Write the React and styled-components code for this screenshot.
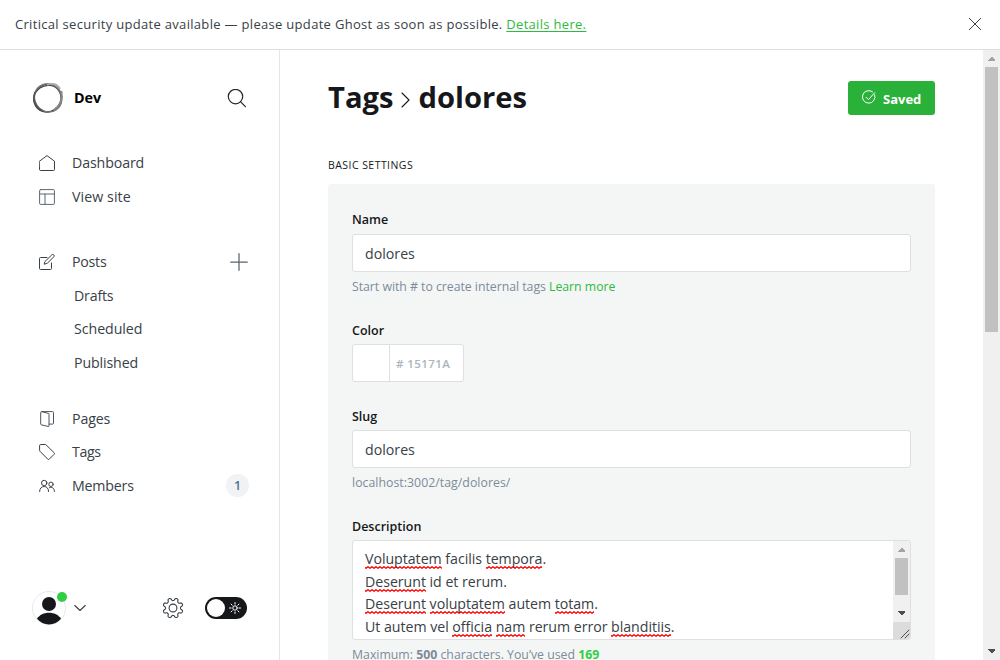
import React from "react";
import styled, { createGlobalStyle, css } from "styled-components";

const GlobalStyle = createGlobalStyle`
  * { box-sizing: border-box; }
  html, body, #root { height: 100%; }
  body {
    margin: 0;
    overflow: hidden;
    background: #fff;
    color: #394047;
    font-family: "Open Sans", "Noto Sans", sans-serif;
    font-size: 14.2px;
  }
  h1, h2, p { margin: 0; font: inherit; }
  button { margin: 0; padding: 0; border: 0; background: none; font: inherit; color: inherit; }
  a { color: #30b940; text-decoration: none; }
  svg { display: block; flex: none; }
`;

const Page = styled.div`
  display: flex;
  flex-direction: column;
  width: 1000px;
  height: 660px;
  overflow: hidden;
`;

const Banner = styled.header`
  display: flex;
  flex: none;
  align-items: center;
  justify-content: space-between;
  height: 50px;
  padding: 0 18px 2px 15px;
  border-bottom: 1px solid #dddddd;
  font-size: 13px;
  letter-spacing: 0.31px;
  white-space: nowrap;

  a { text-decoration: underline; text-underline-offset: 2px; }
`;

const Body = styled.div`
  display: flex;
  flex: 1;
  min-height: 0;
`;

const Sidebar = styled.nav`
  display: flex;
  flex: none;
  flex-direction: column;
  width: 280px;
  border-right: 1px solid #e3e5e6;
`;

const SiteHeader = styled.div`
  display: flex;
  align-items: center;
  height: 32px;
  margin: 32px 33px 32.25px 32px;
`;

const SiteName = styled.div`
  flex: 1;
  margin-left: 10px;
  padding-bottom: 2px;
  color: #000;
  font-size: 14.3px;
  font-weight: 700;
`;

const NavGroup = styled.div`
  margin-bottom: ${(p) => p.$gap || 0}px;
  padding: 0 31px 0 39px;
`;

const NavItem = styled.div`
  display: flex;
  align-items: center;
  height: 33.5px;
  padding-left: ${(p) => (p.$sub ? 35 : 0)}px;
`;

const NavLabel = styled.span`
  flex: 1;
  margin-left: ${(p) => (p.$sub ? 0 : 17)}px;
  padding-bottom: 0.5px;
  letter-spacing: ${(p) => p.$ls ?? -0.12}px;
`;

const Badge = styled.span`
  width: 23px;
  height: 23px;
  margin-right: -1px;
  border-radius: 50%;
  background: #f0f2f4;
  color: #54709a;
  font-size: 12.5px;
  font-weight: 600;
  line-height: 24px;
  text-align: center;
`;

const SidebarFooter = styled.div`
  display: flex;
  align-items: center;
  height: 34px;
  margin: auto 32px 35px 32px;
`;

const Avatar = styled.div`
  position: relative;
  width: 34px;
  height: 34px;
  margin-right: 8px;
`;

const Dot = styled.span`
  position: absolute;
  top: 1px;
  right: -1px;
  width: 10px;
  height: 10px;
  border-radius: 50%;
  background: #30cf43;
`;

const FooterTools = styled.div`
  display: flex;
  align-items: center;
  gap: 21px;
  margin-left: auto;
`;

const Toggle = styled.button`
  display: flex;
  align-items: center;
  justify-content: space-between;
  width: 42px;
  height: 22px;
  padding: 0 6px 0 2px;
  border-radius: 11px;
  background: #15171a;
`;

const Knob = styled.span`
  width: 18px;
  height: 18px;
  border-radius: 50%;
  background: #fff;
`;

const Main = styled.main`
  flex: 1;
  min-width: 0;
  padding: 0 48px;
  overflow: hidden;
`;

const TitleBar = styled.div`
  display: flex;
  align-items: center;
  justify-content: space-between;
  height: 34px;
  margin-top: 31px;
`;

const Title = styled.h1`
  display: flex;
  align-items: center;
  padding-bottom: 2px;
  color: #15171a;
  font-size: 29.2px;
  font-weight: 700;
  line-height: 34px;

  svg { margin: 6px 9px 0 7px; }
`;

const SaveButton = styled.button`
  display: flex;
  align-items: center;
  width: 87px;
  height: 34px;
  padding-left: 14px;
  border-radius: 3px;
  background: #2ab139;
  color: #fff;
  font-size: 13px;
  font-weight: 700;
  line-height: 34px;

  svg { margin: -2px 7px 0 0; }
`;

const SaveLabel = styled.span`
  padding-top: 2px;
`;

const SectionTitle = styled.h2`
  height: 19px;
  margin: 41px 0 9px;
  color: #15171a;
  font-size: 10.5px;
  line-height: 19px;
  letter-spacing: 0.45px;
`;

const Panel = styled.section`
  display: flex;
  flex-direction: column;
  width: 607px;
  height: 600px;
  padding: 24px;
  border-radius: 3px;
  background: #f4f6f6;
`;

const Label = styled.label`
  height: 22px;
  margin: ${(p) => p.$top || 1}px 0 ${(p) => (p.$top ? 2 : 3)}px;
  color: #15171a;
  font-size: 12.5px;
  font-weight: 600;
  line-height: 22px;
`;

const boxed = css`
  border: 1px solid #dddfe0;
  border-radius: 3px;
  background: #fff;
`;

const Input = styled.div`
  ${boxed}
  height: 38px;
  padding: 0 12px;
  line-height: 38px;
`;

const ColorInput = styled.div`
  ${boxed}
  display: flex;
  width: 112px;
  height: 38px;
  color: #abb4be;
  font-size: 11.5px;
  font-weight: 600;
  line-height: 38px;
  letter-spacing: 0.42px;
`;

const Swatch = styled.span`
  width: 37px;
  margin-right: 6px;
  border-right: 1px solid #dddfe0;
`;

const Hint = styled.p`
  height: 20px;
  margin-top: 5px;
  margin-bottom: -1px;
  color: #7c8b9a;
  font-size: 12.3px;
  line-height: 20px;
  letter-spacing: ${(p) => p.$ls || 0}px;
  white-space: nowrap;

  b { font-weight: 700; }
`;

const Used = styled.b`
  color: #30cf43;
`;

const TextArea = styled.div`
  ${boxed}
  display: flex;
  flex: none;
  height: 100px;
  overflow: hidden;
`;

const TextLines = styled.div`
  flex: 1;
  padding: 7px 0 0 12px;
`;

const TextLine = styled.div`
  height: 22.5px;
  line-height: 22.5px;
  white-space: nowrap;
  letter-spacing: -0.04px;
`;

const Misspelled = styled.span`
  padding-bottom: 1px;
  background: url("data:image/svg+xml,%3Csvg xmlns='http://www.w3.org/2000/svg' width='4' height='3'%3E%3Cpath d='M-1 .7L1 2.3L3 .7L5 2.3' fill='none' stroke='%23ff0000' stroke-width='1.3'/%3E%3C/svg%3E") left bottom / 4px 3px repeat-x;
`;

const ScrollColumn = styled.div`
  display: flex;
  flex-direction: column;
  width: 17px;
`;

const ScrollTrack = styled.div`
  display: flex;
  flex: ${(p) => (p.$fill ? 1 : "none")};
  flex-direction: column;
  align-items: center;
  width: 17px;
  background: #f0f0f0;
`;

const ScrollThumb = styled.div`
  flex: none;
  width: 13px;
  height: ${(p) => p.$h}px;
  margin-bottom: auto;
  background: #c1c1c1;
`;

const ResizeCorner = styled.div`
  width: 17px;
  height: 17px;
  background: #dcdcdc;
`;

function Icon({ w = 16, h = w, sw = 1, color = "#394047", children }) {
  return (
    <svg width={w} height={h} viewBox={`0 0 ${w} ${h}`} fill="none" stroke={color} strokeWidth={sw} strokeLinecap="round" strokeLinejoin="round">
      {children}
    </svg>
  );
}

const HomeIcon = () => (
  <Icon><path d="M.5 6.2 8 .6l7.500 5.600v8.300a1 1 0 0 1-1 1h-13a1 1 0 0 1-1-1z" /></Icon>
);
const LayoutIcon = () => (
  <Icon color="#5d6670"><rect x=".6" y=".6" width="14.800" height="14.800" rx="1" /><path d="M.6 5h14.800M6 5v10.400" /></Icon>
);
const PostsIcon = () => (
  <Icon>
    <path d="M8 3.500H1.500a1 1 0 0 0-1 1v10a1 1 0 0 0 1 1h10a1 1 0 0 0 1-1V9" />
    <path d="M6.200 7.300 12.800.9a1.300 1.300 0 0 1 2 0 1.300 1.300 0 0 1 0 1.900L8.300 9.300l-2.800.8z" />
  </Icon>
);
const PagesIcon = () => (
  <Icon color="#4c545d">
    <path d="M2.500.6 9 2.300a1 1 0 0 1 1 1V14.800a.7.700 0 0 1-1 .6l-6.300-1.500a1 1 0 0 1-1-1V1.600a1 1 0 0 1 1-1h10.800a1 1 0 0 1 1 1v10.500a1 1 0 0 1-1 1H10.200" />
  </Icon>
);
const TagIcon = () => (
  <Icon><path d="M.6 1.500a1 1 0 0 1 1-1H6.300a1 1 0 0 1 .7.300l8.200 8a1 1 0 0 1 0 1.400l-5 5a1 1 0 0 1-1.400 0L.9 7.200a1 1 0 0 1-.3-.7z" /></Icon>
);
const MembersIcon = () => (
  <Icon>
    <circle cx="5.200" cy="5" r="2.700" />
    <path d="M.6 13.500c0-3 1.800-5 4.600-5 2.700 0 4.400 2 4.400 5" />
    <circle cx="12" cy="6.300" r="2.200" />
    <path d="M10.500 9.600c3-1 4.900.7 4.900 3.900" />
  </Icon>
);
const SearchIcon = () => (
  <Icon w={19} sw={1.2} color="#24282c"><circle cx="8.500" cy="7.600" r="7.200" /><path d="m13.700 12.800 4.700 4.900" /></Icon>
);
const PlusIcon = () => (
  <Icon w={18} sw={1.25} color="#5a636c"><path d="M9 .7v16.600M.7 9h16.600" /></Icon>
);
const CloseIcon = () => (
  <Icon w={14}><path d="m1.300 1.300 11.400 11.400M12.700 1.300 1.300 12.700" /></Icon>
);
const ChevronRight = () => (
  <Icon w={9} h={16} sw={1.1} color="#15171a"><path d="m1 1 7 7-7 7" /></Icon>
);
const ChevronDown = () => (
  <Icon w={12} h={8} sw={1.1}><path d="m.8 1.500 5.200 5L11.200 1.500" /></Icon>
);
const CheckIcon = () => (
  <Icon w={14} color="#fff">
    <path d="M12.700 4.800A6.300 6.300 0 1 1 10.500 1.800" />
    <path d="M4 7.200 6.400 9.600 12.700 2.700" />
  </Icon>
);

/* Closed outline with eight rounded teeth. */
function gearOutline(center, radius, depth) {
  const points = [];
  for (let i = 0; i < 128; i += 1) {
    const a = (i / 128) * Math.PI * 2;
    const wave = Math.tanh(-1.8 * Math.cos(8 * a));
    const r = radius + wave * depth;
    points.push(`${(center + r * Math.cos(a)).toFixed(2)} ${(center + r * Math.sin(a)).toFixed(2)}`);
  }
  return `M${points.join("L")}z`;
}

const GearIcon = () => (
  <Icon w={22} sw={1.1}>
    <circle cx="11" cy="11" r="3.900" />
    <path d={gearOutline(11, 8.8, 1.4)} />
  </Icon>
);

const SunIcon = () => (
  <Icon w={12} color="#fff">
    <circle cx="6" cy="6" r="2.200" />
    <path d="M6 .5v1.600M6 9.900v1.600M.5 6h1.600M9.900 6h1.600M2.100 2.100l1.100 1.100M8.800 8.800l1.100 1.100M9.900 2.100 8.800 3.200M3.200 8.800 2.100 9.900" />
  </Icon>
);

const SiteLogo = () => (
  <svg width="32" height="32" viewBox="0 0 32 32" fill="none">
    <circle cx="15.800" cy="16" r="13.900" stroke="#333" strokeWidth="1.200" />
    <ellipse cx="15.400" cy="16.600" rx="13.900" ry="13" stroke="#444" strokeWidth="1.300" transform="rotate(-35 15.400 16.600)" />
    <ellipse cx="16.200" cy="15.900" rx="14.400" ry="13.300" stroke="#777" strokeWidth="1.200" transform="rotate(55 16.200 15.900)" />
    <path d="M15 3c5-2.500 10.500-1 13 4" stroke="#aaa" strokeWidth="1.800" />
    <path d="M29.400 9c1.500 7.500-1.200 15-7.900 19.300" stroke="#888" strokeWidth="2" />
    <path d="M3 10C.5 16.500 3 25 10.500 28.700" stroke="#555" strokeWidth="1.400" />
  </svg>
);

const UserIcon = () => (
  <svg width="34" height="34" viewBox="0 0 34 34">
    <circle cx="17" cy="17" r="16.500" fill="#fff" stroke="#e6e8ea" />
    <circle cx="17" cy="13" r="7" fill="#15171a" />
    <path d="M5 27.800C7.500 23.800 12 21.800 17 21.800s9.500 2 12 6A16.500 16.500 0 0 1 17 33.500 16.500 16.500 0 0 1 5 27.800z" fill="#15171a" />
  </svg>
);

function ScrollArrow({ down, color }) {
  return (
    <svg width="17" height="17" viewBox="0 0 17 17" fill={color} shapeRendering="crispEdges">
      <path d={down ? "M5 6h7v1L8.500 10.500 5 7z" : "M5 11h7v-1L8.500 6.500 5 10z"} />
    </svg>
  );
}

function Scrollbar({ thumb, fill }) {
  return (
    <ScrollTrack $fill={fill}>
      <ScrollArrow color="#a3a3a3" />
      <ScrollThumb $h={thumb} />
      <ScrollArrow down color="#505050" />
    </ScrollTrack>
  );
}

export default function App() {
  return (
    <>
      <GlobalStyle />
      <Page>
        <Banner>
          <span>
            Critical security update available — please update Ghost as soon as possible. <a>Details here.</a>
          </span>
          <CloseIcon />
        </Banner>
        <Body>
          <Sidebar>
            <SiteHeader>
              <SiteLogo />
              <SiteName>Dev</SiteName>
              <SearchIcon />
            </SiteHeader>
            <NavGroup $gap={32}>
              <NavItem><HomeIcon /><NavLabel>Dashboard</NavLabel></NavItem>
              <NavItem><LayoutIcon /><NavLabel $ls={0.08}>View site</NavLabel></NavItem>
            </NavGroup>
            <NavGroup $gap={22.5}>
              <NavItem><PostsIcon /><NavLabel $ls={-0.25}>Posts</NavLabel><PlusIcon /></NavItem>
              <NavItem $sub><NavLabel $sub $ls={-0.2}>Drafts</NavLabel></NavItem>
              <NavItem $sub><NavLabel $sub $ls={-0.05}>Scheduled</NavLabel></NavItem>
              <NavItem $sub><NavLabel $sub>Published</NavLabel></NavItem>
            </NavGroup>
            <NavGroup>
              <NavItem><PagesIcon /><NavLabel>Pages</NavLabel></NavItem>
              <NavItem><TagIcon /><NavLabel $ls={-0.35}>Tags</NavLabel></NavItem>
              <NavItem><MembersIcon /><NavLabel $ls={-0.18}>Members</NavLabel><Badge>1</Badge></NavItem>
            </NavGroup>
            <SidebarFooter>
              <Avatar><UserIcon /><Dot /></Avatar>
              <ChevronDown />
              <FooterTools>
                <GearIcon />
                <Toggle><Knob /><SunIcon /></Toggle>
              </FooterTools>
            </SidebarFooter>
          </Sidebar>
          <Main>
            <TitleBar>
              <Title>Tags<ChevronRight />dolores</Title>
              <SaveButton><CheckIcon /><SaveLabel>Saved</SaveLabel></SaveButton>
            </TitleBar>
            <SectionTitle>BASIC SETTINGS</SectionTitle>
            <Panel>
              <Label>Name</Label>
              <Input>dolores</Input>
              <Hint $ls={-0.03}>Start with # to create internal tags <a>Learn more</a></Hint>
              <Label $top={24}>Color</Label>
              <ColorInput><Swatch /># 15171A</ColorInput>
              <Label $top={24}>Slug</Label>
              <Input>dolores</Input>
              <Hint $ls={0.03}>localhost:3002/tag/dolores/</Hint>
              <Label $top={24}>Description</Label>
              <TextArea>
                <TextLines>
                  <TextLine><Misspelled>Voluptatem</Misspelled> facilis <Misspelled>tempora</Misspelled>.</TextLine>
                  <TextLine><Misspelled>Deserunt</Misspelled> id et rerum.</TextLine>
                  <TextLine><Misspelled>Deserunt</Misspelled> <Misspelled>voluptatem</Misspelled> autem <Misspelled>totam</Misspelled>.</TextLine>
                  <TextLine>Ut autem vel <Misspelled>officia</Misspelled> <Misspelled>nam</Misspelled> rerum error <Misspelled>blanditiis</Misspelled>.</TextLine>
                </TextLines>
                <ScrollColumn>
                  <Scrollbar fill thumb={37} />
                  <ResizeCorner>
                    <Icon w={17} color="#505050"><path d="m8 16 8-8M12 16l4-4" /></Icon>
                  </ResizeCorner>
                </ScrollColumn>
              </TextArea>
              <Hint>Maximum: <b>500</b> characters. You’ve used <Used>169</Used></Hint>
            </Panel>
          </Main>
          <Scrollbar thumb={265} />
        </Body>
      </Page>
    </>
  );
}
